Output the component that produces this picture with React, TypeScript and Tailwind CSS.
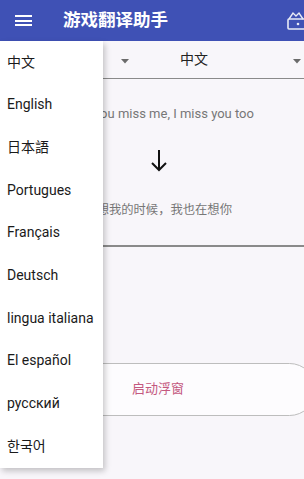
import React from 'react';

const languages = ['中文', 'English', '日本語', 'Portugues', 'Français', 'Deutsch', 'lingua italiana', 'El español', 'русский', '한국어'];

function Caret({ className }: { className: string }) {
    return (
        <svg className={className} width="8" height="5" viewBox="0 0 8 5">
            <path d="M0 0 L8 0 L4 4.5 Z" fill="#6b6b6b" />
        </svg>
    );
}

export default function App() {
    return (
        <div
            className="relative w-[304px] h-[479px] overflow-hidden bg-[#f8f6fa]"
            style={{ fontFamily: 'Roboto, "Noto Sans CJK SC", sans-serif' }}
        >
            {/* toolbar */}
            <div className="h-[41px] bg-[#3f51b5] flex items-center">
                <div className="ml-[15px] w-[17px] flex flex-col gap-[2.5px]">
                    <div className="h-[2px] bg-white" />
                    <div className="h-[2px] bg-white" />
                    <div className="h-[2px] bg-white" />
                </div>
                <h1 className="ml-[31px] text-[17.5px] font-bold text-white leading-none">游戏翻译助手</h1>
                <svg className="ml-auto" width="18" height="22" viewBox="0 0 18 22">
                    <path d="M3 9 L7 3 L10 6 L13 3 L17 9" fill="none" stroke="#e8eaf6" strokeWidth="1.4" />
                    <rect x="2" y="9" width="17" height="10" rx="1" fill="none" stroke="#e8eaf6" strokeWidth="1.6" />
                    <circle cx="12" cy="14" r="1.3" fill="#e8eaf6" />
                </svg>
            </div>

            {/* main */}
            <div className="flex flex-col">
                <div className="h-[38px] border-b border-[#8a8a8a] relative flex items-center">
                    <Caret className="absolute left-[121px] top-[18px]" />
                    <span className="absolute left-[180px] text-[14px] text-[#222]">中文</span>
                    <Caret className="absolute left-[293px] top-[18px]" />
                </div>
                <p className="mt-[27px] pl-[8px] text-center text-[13px] leading-[16px] text-[#777]">When you miss me, I miss you too</p>
                <div className="mt-[27px] flex pl-[150px]">
                    <svg width="18" height="23" viewBox="0 0 18 23">
                        <path d="M9 1 L9 21 M2 14 L9 21 L16 14" fill="none" stroke="#111" strokeWidth="2" />
                    </svg>
                </div>
                <p className="mt-[30px] text-center text-[12.3px] leading-[16px] text-[#777]">当你想我的时候，我也在想你</p>
                <div className="mt-[27px] h-[1.5px] bg-[#8a8a8a]" />
                <button className="mt-[116px] w-[316px] h-[53px] rounded-full border border-[#bdbdbd] bg-[#fdfcfe] text-[13px] text-[#c4587f]">
                    启动浮窗
                </button>
            </div>

            {/* drawer */}
            <div className="absolute left-0 top-[41px] w-[103px] bg-white shadow-[2px_3px_6px_rgba(0,0,0,0.22)]">
                {languages.map((lang) => (
                    <div key={lang} className="h-[42.67px] flex items-center pl-[7px] text-[14px] text-[#1a1a1a] whitespace-nowrap">
                        {lang}
                    </div>
                ))}
            </div>
        </div>
    );
}
